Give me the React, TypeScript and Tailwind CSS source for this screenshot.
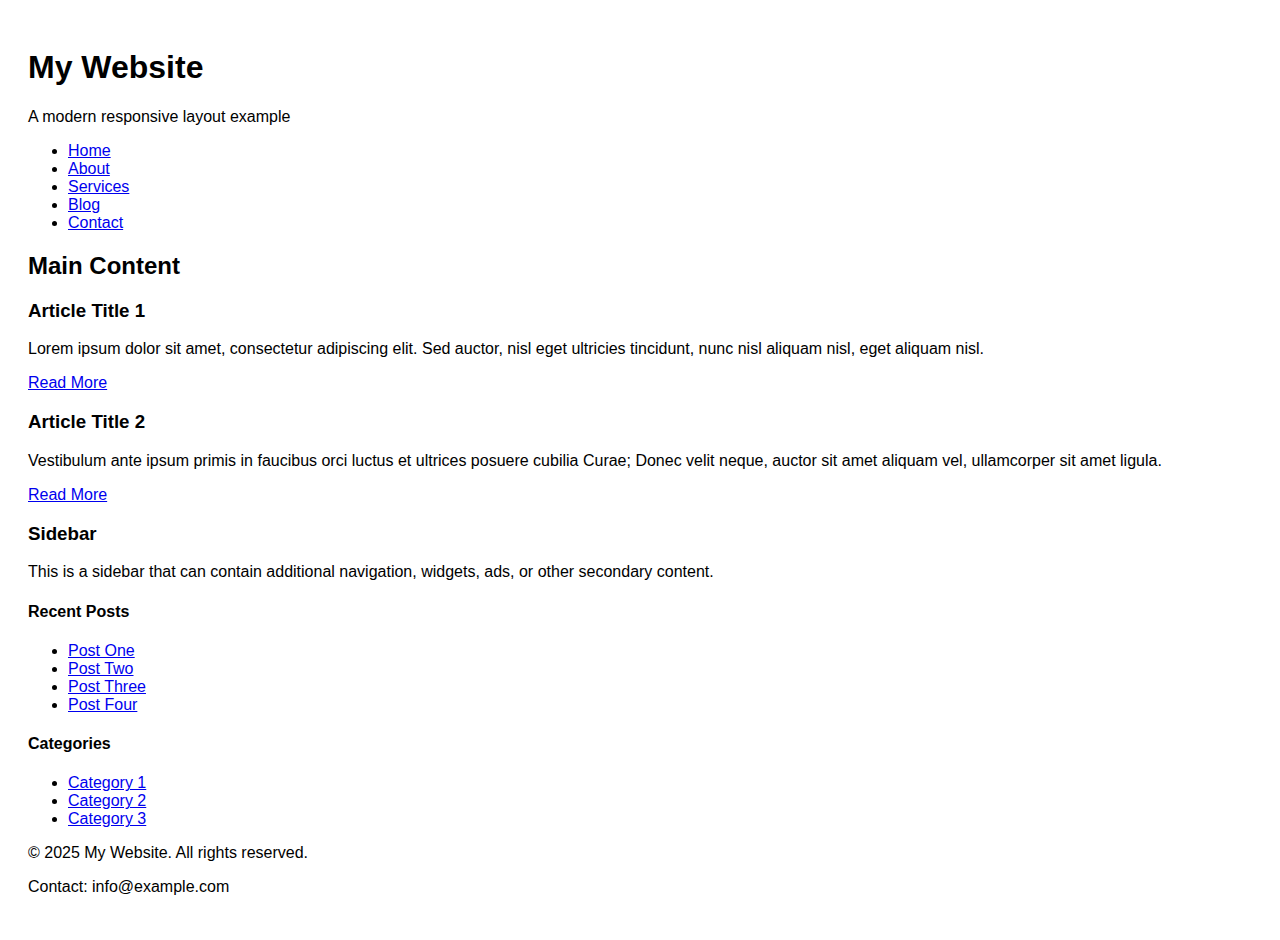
import React from 'react';

// Plain document look: browser-default spacing rebuilt on top of preflight.

const link = 'text-[#0000ee] underline';

function LinkList({ items }: { items: string[] }) {
  return (
    <ul className="my-4 list-disc pl-10">
      {items.map((item) => (
        <li key={item}>
          <a href="#" className={link}>
            {item}
          </a>
        </li>
      ))}
    </ul>
  );
}

export default function App() {
  return (
    <div className="min-h-screen bg-white px-[28px] pt-[28px] pb-[28px] text-[16px] leading-[normal] text-black [font-family:'Liberation_Sans',Arial,sans-serif]">
      <header>
        <h1 className="my-[21.44px] text-[32px] font-bold">My Website</h1>
        <p className="my-4">A modern responsive layout example</p>
        <nav>
          <LinkList items={['Home', 'About', 'Services', 'Blog', 'Contact']} />
        </nav>
      </header>

      <main>
        <h2 className="my-[19.92px] text-[24px] font-bold">Main Content</h2>
        <article>
          <h3 className="my-[18.72px] text-[18.72px] font-bold">Article Title 1</h3>
          <p className="my-4">
            Lorem ipsum dolor sit amet, consectetur adipiscing elit. Sed auctor, nisl eget ultricies tincidunt, nunc nisl aliquam nisl, eget aliquam nisl.
          </p>
          <p className="my-4">
            <a href="#" className={link}>Read More</a>
          </p>
        </article>
        <article>
          <h3 className="my-[18.72px] text-[18.72px] font-bold">Article Title 2</h3>
          <p className="my-4">
            Vestibulum ante ipsum primis in faucibus orci luctus et ultrices posuere cubilia Curae; Donec velit neque, auctor sit amet aliquam vel, ullamcorper sit amet ligula.
          </p>
          <p className="my-4">
            <a href="#" className={link}>Read More</a>
          </p>
        </article>
      </main>

      <aside>
        <h3 className="my-[18.72px] text-[18.72px] font-bold">Sidebar</h3>
        <p className="my-4">This is a sidebar that can contain additional navigation, widgets, ads, or other secondary content.</p>
        <h4 className="my-[21.28px] text-[16px] font-bold">Recent Posts</h4>
        <LinkList items={['Post One', 'Post Two', 'Post Three', 'Post Four']} />
        <h4 className="my-[21.28px] text-[16px] font-bold">Categories</h4>
        <LinkList items={['Category 1', 'Category 2', 'Category 3']} />
      </aside>

      <footer>
        <p className="my-4">© 2025 My Website. All rights reserved.</p>
        <p className="my-4">Contact: info@example.com</p>
      </footer>
    </div>
  );
}
